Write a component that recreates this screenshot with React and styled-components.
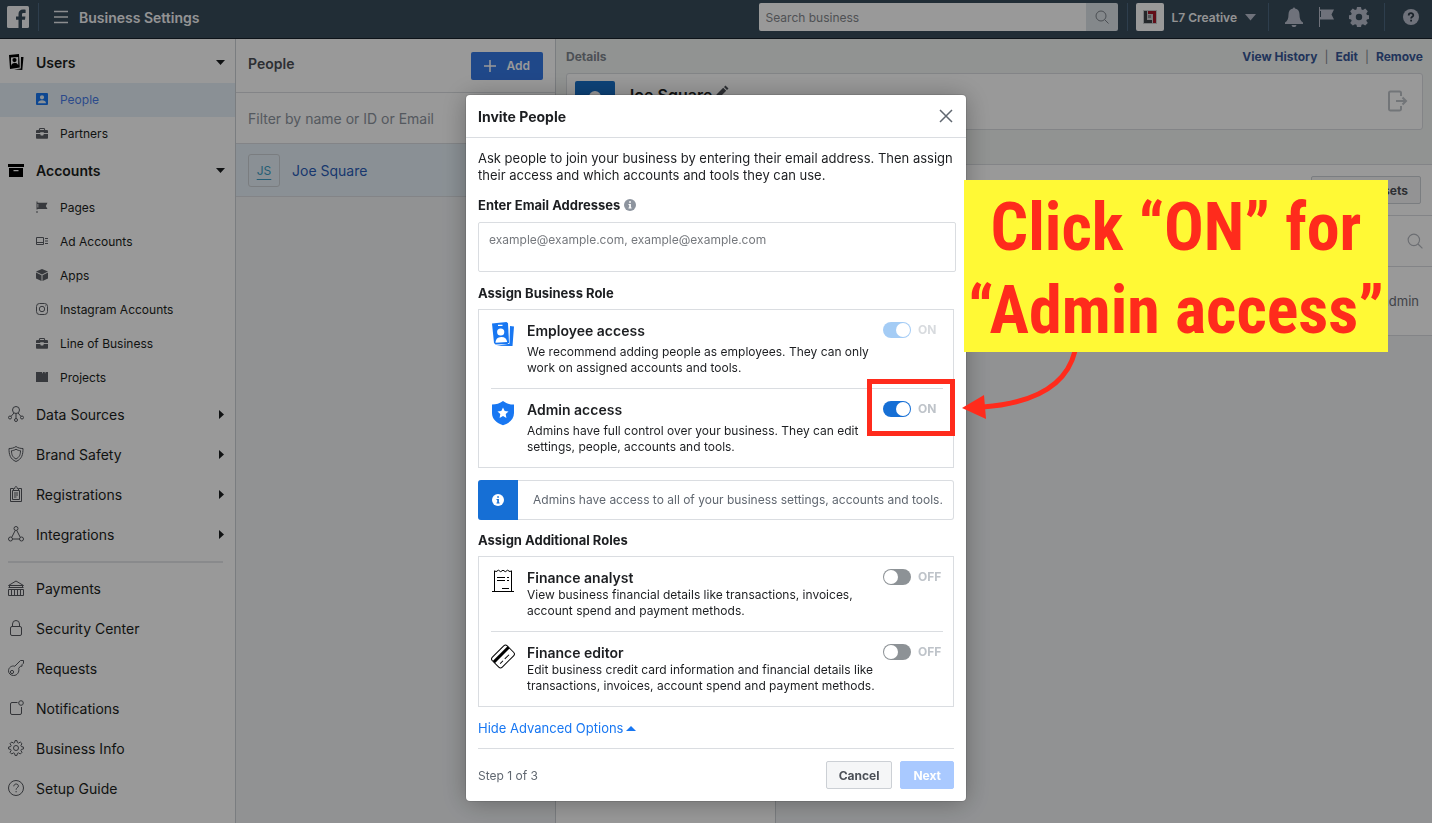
import React, { useState } from "react";
import styled, { createGlobalStyle } from "styled-components";

const GlobalStyle = createGlobalStyle`
  :root {
    --ink: #1c1e21;
    --muted: #606770;
    --line: #dadde1;
    --blue: #1877f2;
    --deep-blue: #166fd5;
    --panel: #f2f4f6;
    --red: #ff2b1c;
  }

  * {
    box-sizing: border-box;
  }

  body {
    margin: 0;
    color: var(--ink);
    font-family: Inter, Roboto, "Liberation Sans", sans-serif;
    font-size: 13px;
  }

  button,
  input,
  textarea {
    font: inherit;
  }
`;

/* ---------- page shell ---------- */

const Page = styled.div`
  display: flex;
  flex-direction: column;
  min-height: 100vh;
`;

const Columns = styled.div`
  display: grid;
  grid-template-columns: 236px 320px 1fr;
  flex: 1;
`;

/* ---------- top bar ---------- */

const TopBar = styled.header`
  display: flex;
  align-items: center;
  justify-content: space-between;
  height: 39px;
  padding: 0 13px 4px 7px;
  background-color: #384b5b;
  border-bottom: 1px solid #17212b;
  color: #f5f6f7;
`;

const BarGroup = styled.div`
  display: flex;
  align-items: center;
`;

const BarDivider = styled.span`
  width: 1px;
  height: 28px;
  margin: 0 ${(props) => props.$after}px 0 ${(props) => props.$before}px;
  background-color: #4d6880;
`;

const IconButton = styled.button`
  display: flex;
  padding: 0;
  border: 0;
  background: none;
  color: ${(props) => props.$tone || "#b9bfcd"};
`;

const BarTitle = styled.h1`
  margin: 0 0 0 11px;
  font-size: 14px;
  font-weight: 600;
`;

const Search = styled.form`
  display: flex;
  width: 359px;
  height: 28px;
`;

const SearchInput = styled.input`
  flex: 1;
  min-width: 0;
  padding: 0 7px;
  border: 0;
  border-radius: 2px 0 0 2px;
  background-color: #fff;
  font-size: 12px;

  &::placeholder {
    color: #85888d;
    opacity: 1;
  }
`;

const SearchButton = styled.button`
  display: flex;
  align-items: center;
  justify-content: center;
  width: 32px;
  padding: 0;
  border: 0;
  border-radius: 0 2px 2px 0;
  background-color: #dce3e8;
  color: #7d838b;
`;

const Account = styled.button`
  display: flex;
  align-items: center;
  gap: 8px;
  padding: 0;
  border: 0;
  background: none;
  color: #f5f6f7;
  font-size: 12px;
  font-weight: 600;
`;

const BarIcons = styled.div`
  display: flex;
  align-items: center;
  gap: 14px;
`;

/* ---------- side menu ---------- */

const SideMenu = styled.nav`
  padding-top: 4px;
  border-right: 1px solid #ccd0d5;
  background-color: #fff;
`;

const MenuRow = styled.a`
  display: flex;
  align-items: center;
  gap: 12px;
  height: 40px;
  padding: 0 9px 2px 8px;
  color: var(--ink);
  font-size: 14px;
  font-weight: ${(props) => (props.$bold ? 600 : 400)};
  text-decoration: none;

  span {
    flex: 1;
  }
`;

const SubRow = styled.a`
  display: flex;
  align-items: center;
  gap: 12px;
  height: 34px;
  padding: 0 0 2px 36px;
  background-color: ${(props) => (props.$active ? "#e7f1f8" : "transparent")};
  color: ${(props) => (props.$active ? "#4a7ce8" : "var(--ink)")};
  font-size: 12px;
  text-decoration: none;
`;

const MenuRule = styled.hr`
  height: 2px;
  margin: 6px 12px 6px 8px;
  border: 0;
  background-color: #e4e6ea;
`;

/* ---------- people list ---------- */

const PeopleColumn = styled.section`
  border-right: 1px solid #ccd0d5;
  background-color: var(--panel);
`;

const PeopleHeader = styled.div`
  display: flex;
  align-items: center;
  justify-content: space-between;
  height: 54px;
  padding: 0 12px;
  border-bottom: 1px solid var(--line);
  background-color: #fff;
`;

const ColumnTitle = styled.h2`
  margin: 0;
  padding-bottom: 4px;
  color: #4b4f56;
  font-size: 14px;
  font-weight: 600;
`;

const AddButton = styled.button`
  display: flex;
  align-items: center;
  gap: 10px;
  height: 28px;
  padding: 0 13px;
  border: 0;
  border-radius: 2px;
  background-color: #3578e5;
  color: #fff;
  font-size: 12px;
  font-weight: 600;
`;

const FilterInput = styled.input`
  display: block;
  width: 100%;
  height: 51px;
  padding: 0 12px;
  border: 0;
  border-bottom: 1px solid var(--line);
  background-color: #fff;
  font-size: 14px;

  &::placeholder {
    color: #8d949e;
    opacity: 1;
  }
`;

const PersonRow = styled.a`
  display: flex;
  align-items: center;
  gap: 12px;
  height: 53px;
  padding: 0 12px;
  border-bottom: 1px solid var(--line);
  background-color: #e7f1f8;
  color: #2a5db8;
  font-size: 14px;
  text-decoration: none;
`;

const Initials = styled.span`
  display: flex;
  align-items: center;
  justify-content: center;
  width: 32px;
  height: 33px;
  border: 1px solid #ccd0d5;
  border-radius: 3px;
  color: #3c9cc4;
  font-size: 12px;
  text-decoration: underline;
  text-underline-offset: 4px;
`;

/* ---------- details ---------- */

const Details = styled.main`
  display: flex;
  flex-direction: column;
  background-color: var(--panel);
`;

const DetailsTop = styled.div`
  padding: 0 9px 34px 10px;
  border-bottom: 1px solid var(--line);
  background-color: #f2f5f3;
`;

const DetailsBar = styled.div`
  display: flex;
  align-items: center;
  justify-content: space-between;
  height: 34px;
  color: #7f858e;
  font-size: 12px;
  font-weight: 700;
`;

const Actions = styled.div`
  display: flex;
  gap: 7px;
  font-weight: 400;

  a {
    color: #385898;
    font-weight: 700;
    text-decoration: none;
  }
`;

const ProfileCard = styled.div`
  display: flex;
  gap: 10px;
  height: 57px;
  padding: 7px 14px 7px 8px;
  overflow: hidden;
  border: 1px solid var(--line);
  border-radius: 3px;
  background-color: #fff;
`;

const ProfilePhoto = styled.div`
  width: 40px;
  height: 40px;
  border-radius: 2px;
  background-color: #166fc8;
`;

const ProfileName = styled.h2`
  display: flex;
  flex: 1;
  gap: 4px;
  margin: 4px 0 0;
  font-size: 16px;
  font-weight: 600;
  line-height: 20px;
`;

const Assets = styled.div`
  display: grid;
  grid-template-columns: 220px 1fr;
  flex: 1;
`;

const AssetTypes = styled.div`
  border-right: 1px solid #ccd0d5;
  background-color: #fff;
`;

const AssetRow = styled.div`
  display: flex;
  align-items: center;
  justify-content: flex-end;
  height: ${(props) => props.$height}px;
  padding: 0 ${(props) => props.$inset}px;
  border-bottom: 1px solid var(--line);
  background-color: #fff;
  color: #6b7078;

  svg {
    color: #b4b8bf;
  }
`;

/* ---------- dialog ---------- */

const Backdrop = styled.div`
  position: fixed;
  inset: 0;
  display: flex;
  align-items: flex-start;
  justify-content: center;
  padding-top: 95px;
  background-color: rgba(0, 0, 0, 0.4);
`;

const Dialog = styled.section`
  position: relative;
  width: 500px;
  border-radius: 4px;
  background-color: #fff;
  box-shadow: 0 2px 26px rgba(0, 0, 0, 0.3), 0 0 0 1px rgba(0, 0, 0, 0.1);
`;

const DialogHeader = styled.div`
  display: flex;
  align-items: center;
  justify-content: space-between;
  height: 43px;
  padding: 0 13px 0 12px;
  border-bottom: 1px solid var(--line);
`;

const DialogTitle = styled.h2`
  margin: 0;
  font-size: 14px;
  font-weight: 700;
`;

const DialogBody = styled.div`
  padding: 12px 12px 0;
`;

const Intro = styled.p`
  margin: 0 -6px 12px 0;
  line-height: 17px;
`;

const FieldLabel = styled.label`
  display: flex;
  align-items: center;
  gap: 4px;
  height: 18px;
  font-weight: 700;
`;

const RolesHeading = styled.h3`
  height: 18px;
  margin: 0 0 7px;
  font-size: 13px;
  font-weight: 700;
  line-height: 18px;
`;

const EmailBox = styled.textarea`
  display: block;
  width: 478px;
  height: 50px;
  margin: 8px 0 12px;
  padding: 8px 10px;
  border: 1px solid var(--line);
  border-radius: 2px;
  font-size: 12px;
  line-height: 18px;
  resize: none;

  &::placeholder {
    color: #75787d;
    opacity: 1;
  }
`;

const RoleList = styled.div`
  padding: 0 10px 0 12px;
  border: 1px solid var(--line);
`;

const Role = styled.div`
  display: flex;
  padding: 12px 0;

  & + & {
    border-top: 1px solid var(--line);
  }

  & > svg {
    flex: none;
  }
`;

const RoleText = styled.div`
  display: flex;
  flex: 1;
  flex-direction: column;
  gap: ${(props) => (props.$spaced ? 4 : 0)}px;
  margin-left: 12px;
`;

const RoleName = styled.label`
  font-size: 14px;
  font-weight: 600;
  line-height: 18px;
`;

const RoleInfo = styled.p`
  margin: 0;
  font-size: 12px;
  line-height: 16px;
`;

const SwitchWrap = styled.div`
  display: flex;
  gap: 7px;
  width: 60px;
  height: 16px;
  opacity: ${(props) => (props.$dim ? 0.6 : 1)};
  color: #bec3c9;
  font-size: 12px;
  font-weight: 700;
  line-height: 16px;
`;

const Switch = styled.input`
  appearance: none;
  flex: none;
  width: 28px;
  height: 16px;
  margin: 0;
  border-radius: 8px;
  background-color: #8d9296;

  &::before {
    content: "";
    display: block;
    width: 14px;
    height: 14px;
    margin: 1px;
    border-radius: 50%;
    background-color: #fff;
  }

  &:checked {
    background-color: ${(props) => (props.$dim ? "#69abf0" : "#166fd5")};
  }

  &:checked::before {
    margin-left: 13px;
  }
`;

const Notice = styled.div`
  display: flex;
  height: 40px;
  margin: 12px 0 11px;
  border: 1px solid var(--line);
  border-left: 0;
  border-radius: 3px;
  color: var(--muted);
  font-size: 12px;
  line-height: 38px;
`;

const NoticeIcon = styled.div`
  display: flex;
  align-items: center;
  justify-content: center;
  width: 40px;
  height: 40px;
  margin: -1px 15px 0 0;
  border-radius: 3px 0 0 3px;
  background-color: var(--deep-blue);
  color: #fff;
`;

const MoreButton = styled.button`
  display: flex;
  align-items: center;
  gap: 3px;
  height: 18px;
  margin: 12px 0 11px;
  padding: 0;
  border: 0;
  background: none;
  color: var(--blue);
`;

const Footer = styled.div`
  display: flex;
  align-items: center;
  gap: 8px;
  height: 53px;
  border-top: 1px solid var(--line);
  color: var(--muted);
  font-size: 12px;

  span {
    flex: 1;
  }
`;

const Button = styled.button`
  height: 28px;
  padding: 0 12px;
  border: 1px solid ${(props) => (props.$primary ? "#a9c9ff" : "#ccd0d5")};
  border-radius: 2px;
  background-color: ${(props) => (props.$primary ? "#a9c9ff" : "#f5f6f7")};
  color: ${(props) => (props.$primary ? "#fff" : "#4b4f56")};
  font-size: 12px;
  font-weight: 700;
`;

/* ---------- callout drawn over the dialog ---------- */

const Highlight = styled.div`
  position: absolute;
  top: 284px;
  left: 401px;
  width: 88px;
  height: 57px;
  border: 5px solid var(--red);
`;

const Callout = styled.div`
  position: absolute;
  top: 85px;
  left: 498px;
  width: 424px;
  height: 172px;
  padding-top: 6px;
  background-color: #fff935;
  color: var(--red);
  font-family: "Roboto Condensed", "Liberation Sans Narrow", "Liberation Sans",
    sans-serif;
  font-size: 66px;
  font-weight: 700;
  line-height: 83px;
  text-align: center;
  white-space: nowrap;
`;

const Arrow = styled.svg`
  position: absolute;
  top: 256px;
  left: 495px;
`;

/* ---------- icons ---------- */

const glyphs = {
  badges: (
    <g fill="currentColor" stroke="none">
      <path
        fillRule="evenodd"
        d="M1 1 11 0l.8 13.5L2 15zM3 11.9c.6-2 1.7-2.8 3.6-2.9 1.8-.1 3 .5 3.6 2.2V3L3 3.6zM6.5 4a2 2 0 1 1 0 4.2 2 2 0 0 1 0-4.200z"
      />
      <path d="M13 3h2.500L14.300 16 6 15.600l6.800-1.200z" />
    </g>
  ),
  box: (
    <path
      d="M0 2h16v3H0zM1 6h14v9H1zM5.500 8v1.200h5V8z"
      fill="currentColor"
      fillRule="evenodd"
      stroke="none"
    />
  ),
  person: (
    <path
      d="M3 2h10a1 1 0 0 1 1 1v10a1 1 0 0 1-1 1H3a1 1 0 0 1-1-1V3a1 1 0 0 1 1-1zm5 2.200a2.100 2.100 0 1 0 0 4.200 2.100 2.100 0 0 0 0-4.200zM4 12.200h8C11.800 10 10.300 9.200 8 9.200S4.200 10 4 12.200z"
      fill="currentColor"
      fillRule="evenodd"
      stroke="none"
    />
  ),
  briefcase: (
    <path
      d="M5.500 3h5l.8 2H13a1 1 0 0 1 1 1v2H9.800v-.700H6.200V8H2V6a1 1 0 0 1 1-1h1.700zm.7 1-.3 1h4.200l-.3-1zM2 9h4.200l.6 1.500h2.400L9.800 9H14v4a.8.8 0 0 1-.8.8H2.800A.8.8 0 0 1 2 13z"
      fill="currentColor"
      fillRule="evenodd"
      stroke="none"
    />
  ),
  flag: (
    <path
      d="M2.500 2.500h1v1.200h10L11.800 7l1.700 3h-10v.600h-1zM2.500 12h1v2h-1zM3.500 5v3.600h.8V5z"
      fill="currentColor"
      fillRule="evenodd"
      stroke="none"
    />
  ),
  ads: (
    <path d="M2.500 4.500h7v7h-7zM2.500 9.500h7M11 5.500h3M11 8h3M11 10.500h3" />
  ),
  cube: (
    <path
      d="M8 2l6 2.500-6 3-6-3zM2 5.500l5.500 2.800V14L2 11.500zM14 5.500 8.500 8.300V14l5.500-2.500z"
      fill="currentColor"
      stroke="none"
    />
  ),
  instagram: (
    <g>
      <rect x="2.500" y="2.500" width="11" height="11" rx="3" />
      <circle cx="8" cy="8" r="2.700" />
      <path d="M11 4.800h.6" />
    </g>
  ),
  folder: (
    <path
      d="M2 3h6v1.200h.800V3h2v1.200h.700V3H14v10H2z"
      fill="currentColor"
      stroke="none"
    />
  ),
  sources: (
    <g>
      <circle cx="8" cy="4" r="3.500" />
      <circle cx="2" cy="11.500" r="1.500" />
      <circle cx="14" cy="11.500" r="1.500" />
      <circle cx="8" cy="14" r="1.500" />
      <path d="M8 7.500v5M3 10.400 6 7M13 10.400 10 7" />
    </g>
  ),
  shield: (
    <g>
      <path d="M8 .500c2 1.500 4.500 2 7 2 0 6-1 10.500-7 13-6-2.500-7-7-7-13 2.500 0 5-.5 7-2z" />
      <path d="M8 3.200c1.500 1 3 1.400 4.500 1.500 0 4-1 6.500-4.500 8.300-3.500-1.800-4.500-4.300-4.500-8.300C5 4.600 6.500 4.200 8 3.200z" />
    </g>
  ),
  clipboard: (
    <g>
      <path d="M5 2.500H2.500v13h11v-13H11" />
      <path d="M4.500 4.500h7v9h-7zM5.500 4.200V2.500h1.300c0-2.700 2.400-2.700 2.400 0h1.300v1.700M6 7h4M6 9h4M6 11h2.500" />
    </g>
  ),
  nodes: (
    <g>
      <circle cx="8" cy="2.500" r="2" />
      <circle cx="2.500" cy="13" r="2" />
      <circle cx="13.500" cy="13" r="2" />
      <path d="M7.200 4.500 3.800 11.200M8.800 4.500l3.400 6.700M4.500 13h7" />
    </g>
  ),
  bank: (
    <path d="M.500 5.500 8 1l7.500 4.500zM.500 7.500h15M1.500 5.500v2M14.500 5.500v2M.500 15.500v-6h15v6zM3.500 9.500v6M6.500 9.500v6M9.500 9.500v6M12.500 9.500v6" />
  ),
  lock: (
    <g>
      <rect x="2.500" y="6.500" width="11" height="9" rx="1.500" />
      <path d="M4.500 6.500V4a3.500 3.500 0 0 1 7 0v2.500" />
    </g>
  ),
  key: (
    <g>
      <path d="M12.500.5h3v2.700L14 4.700v1.500h-1.500L10.700 8.300c.9 3.600-1.400 7.200-5 7.200-2.900 0-5.200-1.900-5.200-4.700 0-3.100 2.900-5.500 6.300-4.600z" />
      <circle cx="4" cy="12" r="1.600" />
    </g>
  ),
  notify: (
    <g>
      <path d="M9.500 2.500H4A1.500 1.500 0 0 0 2.500 4v9A1.500 1.500 0 0 0 4 14.500h8a1.500 1.500 0 0 0 1.500-1.500V7" />
      <circle cx="13" cy="3" r="2.300" />
    </g>
  ),
  gear: (
    <g>
      <circle cx="8" cy="8" r="2.500" />
      <path d="M6.600 2.600 7 .600h2l.4 2 1.200.500L12.300 2 14 3.700l-1.100 1.700.5 1.200 2 .4v2l-2 .4-.5 1.200 1.100 1.700-1.700 1.700-1.700-1.100-1.200.500-.4 2H7l-.4-2-1.200-.5L3.700 14 2 12.300l1.100-1.700-.5-1.200-2-.4V7l2-.4.5-1.200L2 3.700 3.700 2l1.700 1.100z" />
    </g>
  ),
  help: (
    <g>
      <circle cx="8" cy="8" r="7.500" />
      <path d="M5.800 6.300c0-3 4.600-3 4.600-.3 0 1.600-2.300 1.700-2.300 3.700M8.100 11v1.300" />
    </g>
  ),
};

function Glyph({ name, tone = "#55585e" }) {
  return (
    <svg
      width="16"
      height="16"
      viewBox="0 0 16 16"
      fill="none"
      stroke="currentColor"
      color={tone}
      aria-hidden="true"
    >
      {glyphs[name]}
    </svg>
  );
}

// the second level icons are twelve pixels wide inside the same artboard
function SmallGlyph({ name, tone = "#5d6066" }) {
  return (
    <svg
      width="12"
      height="12"
      viewBox="2 2 12 12"
      overflow="visible"
      fill="none"
      stroke="currentColor"
      color={tone}
      aria-hidden="true"
    >
      {glyphs[name]}
    </svg>
  );
}

function Caret({ direction }) {
  const paths = { down: "M0 2h9L4.500 7z", right: "M3 0l5 4.500L3 9z", up: "M0 7h10L5 2z" };
  return (
    <svg width="10" height="9" viewBox="0 0 10 9" fill="currentColor" aria-hidden="true">
      <path d={paths[direction]} />
    </svg>
  );
}

function Magnifier({ size = 14 }) {
  return (
    <svg width={size} height={size} viewBox="0 0 14 14" fill="none" stroke="currentColor" aria-hidden="true">
      <circle cx="6" cy="6" r="5" />
      <path d="M9.600 9.600 13.500 13.500" />
    </svg>
  );
}

function InfoDot({ size, mark }) {
  return (
    <svg width={size} height={size} viewBox="0 0 12 12" aria-hidden="true">
      <circle cx="6" cy="6" r="6" fill="currentColor" />
      <path d="M5.200 2.300h1.700v1.500H5.200zM4.500 5h2.400v3.500h.7v1H4.500v-1h.7V6h-.7z" fill={mark} />
    </svg>
  );
}

function EmployeeIcon() {
  return (
    <svg width="24" height="26" viewBox="0 0 24 26" aria-hidden="true">
      <path d="M1 1.500 15.500 0 17 1.300 18 20.300 16.500 22 4.500 22.500 3 21z" fill="#1877f2" />
      <path d="M19 4l4 .5L21.500 24l-16-.3 13-2z" fill="#1877f2" />
      <circle cx="9.700" cy="10" r="3.600" fill="#fff" />
      <path d="M7 2.700h4.500v1.200H7zM4.500 20.800c.2-3.800 2-5.800 5.700-5.900 3.500-.1 5.600 1.500 6 5.200z" fill="#fff" />
    </svg>
  );
}

function AdminIcon() {
  return (
    <svg width="24" height="26" viewBox="0 0 24 26" aria-hidden="true">
      <path d="M12 0c3 2.500 7 3.500 11 3.500v8.500c0 6-4.500 10-11 12.200C5.500 22 1 18 1 12V3.500C5 3.500 9 2.500 12 0z" fill="#1877f2" />
      <path d="M12 6.500l1.700 3.500 3.800.5-2.800 2.600.7 3.900-3.400-1.900L8.600 17l.7-3.900-2.800-2.600 3.800-.5z" fill="#fff" />
    </svg>
  );
}

function ReceiptIcon() {
  return (
    <svg width="24" height="24" viewBox="0 0 24 24" fill="none" stroke="#000" aria-hidden="true">
      <path d="M3.500 22.500V2M20.500 22.500V2M1 22.500h22" />
      <path d="M3.500 1.500 5 2.700l2.400-1.500L9.700 2.700 12 1.200l2.300 1.500 2.300-1.500L19 2.700l1.500-1.200M6 8.500h8M16 8.500h2M6 11.500h8M16 11.500h2M11 19.500h7" />
    </svg>
  );
}

function CardIcon() {
  return (
    <svg width="24" height="26" viewBox="0 0 24 26" fill="none" stroke="#000" aria-hidden="true">
      <g transform="rotate(-45 12 12.500)">
        <rect x="1.500" y="5.500" width="21" height="14" rx="2.500" />
        <path d="M1.500 10h21" strokeWidth="3" />
        <path d="M5 15.500h4M11.500 15.500h6" />
      </g>
    </svg>
  );
}

/* ---------- data ---------- */

const userLinks = [
  { icon: "person", label: "People", active: true },
  { icon: "briefcase", label: "Partners" },
];

const accountLinks = [
  { icon: "flag", label: "Pages" },
  { icon: "ads", label: "Ad Accounts" },
  { icon: "cube", label: "Apps" },
  { icon: "instagram", label: "Instagram Accounts" },
  { icon: "briefcase", label: "Line of Business" },
  { icon: "folder", label: "Projects" },
];

const groupLinks = [
  { icon: "sources", label: "Data Sources" },
  { icon: "shield", label: "Brand Safety" },
  { icon: "clipboard", label: "Registrations" },
  { icon: "nodes", label: "Integrations" },
];

const plainLinks = [
  { icon: "bank", label: "Payments" },
  { icon: "lock", label: "Security Center" },
  { icon: "key", label: "Requests" },
  { icon: "notify", label: "Notifications" },
  { icon: "gear", label: "Business Info" },
  { icon: "help", label: "Setup Guide" },
];

const businessRoles = [
  {
    id: "employee",
    icon: <EmployeeIcon />,
    name: "Employee access",
    info: "We recommend adding people as employees. They can only work on assigned accounts and tools.",
    on: true,
    locked: true,
  },
  {
    id: "admin",
    icon: <AdminIcon />,
    name: "Admin access",
    info: "Admins have full control over your business. They can edit settings, people, accounts and tools.",
    on: true,
  },
];

const extraRoles = [
  {
    id: "analyst",
    icon: <ReceiptIcon />,
    name: "Finance analyst",
    info: "View business financial details like transactions, invoices, account spend and payment methods.",
  },
  {
    id: "editor",
    icon: <CardIcon />,
    name: "Finance editor",
    info: "Edit business credit card information and financial details like transactions, invoices, account spend and payment methods.",
  },
];

/* ---------- components ---------- */

function Header() {
  return (
    <TopBar>
      <BarGroup>
        <svg width="22" height="22" viewBox="0 0 22 22" aria-label="Facebook">
          <rect width="22" height="22" rx="1.500" fill="#f5f6f7" />
          <path
            d="M15 22v-8.300h3l.4-3.200H15V8.400c0-1 .3-1.500 1.600-1.500h2V3.800c-.5 0-1.400-.2-2.600-.2-2.700 0-4.500 1.500-4.500 4.500v2.400H9v3.200h2.500V22z"
            fill="#384b5b"
          />
        </svg>
        <BarDivider $before={9} $after={15} />
        <IconButton type="button" aria-label="Menu" $tone="#e9ebee">
          <svg width="14" height="14" viewBox="0 0 14 14" stroke="currentColor" strokeWidth="1.300">
            <path d="M0 1.500h14M0 7h14M0 12.500h14" />
          </svg>
        </IconButton>
        <BarTitle>Business Settings</BarTitle>
      </BarGroup>
      <BarGroup>
        <Search>
          <SearchInput aria-label="Search business" placeholder="Search business" />
          <SearchButton type="button" aria-label="Search">
            <Magnifier />
          </SearchButton>
        </Search>
        <BarDivider $before={9} $after={8} />
        <Account type="button">
          <svg width="28" height="28" viewBox="0 0 28 28" aria-hidden="true">
            <rect width="28" height="28" rx="2" fill="#fff" />
            <rect x="7" y="7" width="14" height="14" fill="#c9cbce" />
            <path d="M8 8h3v9h5v3H8z" fill="#3d4247" />
            <path d="M12 8h8v12h-3v-9h-5z" fill="#a3182a" />
            <path d="M12 12h3v3h-3z" fill="#8d9094" />
          </svg>
          L7 Creative
          <svg width="11" height="7" viewBox="0 0 11 7" fill="#b9bfcd" aria-hidden="true">
            <path d="M0 0h11L5.500 6.500z" />
          </svg>
        </Account>
        <BarDivider $before={12} $after={15} />
        <BarIcons>
          <IconButton type="button" aria-label="Alerts">
            <svg width="20" height="20" viewBox="0 0 20 20" fill="currentColor">
              <path d="M9 1.500C9 0 11 0 11 1.500c3.200.6 4.500 3 4.500 6 0 4 1 6.500 3.500 8v1.500H1v-1.500c2.500-1.500 3.500-4 3.500-8 0-3 1.300-5.400 4.500-6zM7.500 18h5c-.5 1.700-1.200 2-2.500 2s-2-.3-2.500-2z" />
            </svg>
          </IconButton>
          <IconButton type="button" aria-label="Pages">
            <svg width="17" height="20" viewBox="0 0 17 20" fill="currentColor">
              <path d="M1 0h1v2.500h14L13.500 7.500 16 12.500H2V20H1z" />
              <path d="M2 4h1v6H2z" fill="#384b5b" />
            </svg>
          </IconButton>
          <IconButton type="button" aria-label="Settings">
            <svg width="20" height="20" viewBox="0 0 20 20" fill="currentColor" fillRule="evenodd">
              <path d="M8 0h4l.5 2.500 1.500.6 2.200-1.500 2.600 2.700-1.500 2.200.6 1.400L20 8.200v3.700l-2.100.5-.6 1.400 1.500 2.200-2.600 2.600-2.200-1.400-1.500.6L12 20H8l-.5-2.200-1.500-.6-2.200 1.400-2.600-2.600 1.500-2.200-.6-1.400L0 11.900V8.200l2.100-.3.600-1.400-1.500-2.200 2.600-2.700L6 3.100l1.500-.6zM10 6.800a3.200 3.200 0 1 0 0 6.400 3.200 3.200 0 0 0 0-6.400z" />
            </svg>
          </IconButton>
        </BarIcons>
        <BarDivider $before={15} $after={18} />
        <IconButton type="button" aria-label="Help">
          <svg width="16" height="16" viewBox="0 0 16 16">
            <circle cx="8" cy="8" r="8" fill="currentColor" />
            <path d="M5.700 6.500c0-3 4.600-3 4.600-.3 0 1.600-2.200 1.600-2.200 3.300M8.100 10.800v1.800" fill="none" stroke="#2c3a47" strokeWidth="1.800" />
          </svg>
        </IconButton>
      </BarGroup>
    </TopBar>
  );
}

function SubLinks({ links }) {
  return links.map(({ icon, label, active }) => (
    <SubRow key={label} href="#" $active={active}>
      <SmallGlyph name={icon} tone={active ? "#1877f2" : undefined} />
      {label}
    </SubRow>
  ));
}

function Sidebar() {
  return (
    <SideMenu>
      <MenuRow href="#" $bold>
        <Glyph name="badges" tone="#000" />
        <span>Users</span>
        <Caret direction="down" />
      </MenuRow>
      <SubLinks links={userLinks} />
      <MenuRow href="#" $bold>
        <Glyph name="box" tone="#000" />
        <span>Accounts</span>
        <Caret direction="down" />
      </MenuRow>
      <SubLinks links={accountLinks} />
      {groupLinks.map(({ icon, label }) => (
        <MenuRow key={label} href="#">
          <Glyph name={icon} />
          <span>{label}</span>
          <Caret direction="right" />
        </MenuRow>
      ))}
      <MenuRule />
      {plainLinks.map(({ icon, label }) => (
        <MenuRow key={label} href="#">
          <Glyph name={icon} />
          <span>{label}</span>
        </MenuRow>
      ))}
    </SideMenu>
  );
}

function People() {
  return (
    <PeopleColumn>
      <PeopleHeader>
        <ColumnTitle>People</ColumnTitle>
        <AddButton type="button">
          <svg width="12" height="12" viewBox="0 0 12 12" stroke="currentColor" strokeWidth="1.500" aria-hidden="true">
            <path d="M6 0v12M0 6h12" />
          </svg>
          Add
        </AddButton>
      </PeopleHeader>
      <FilterInput aria-label="Filter people" placeholder="Filter by name or ID or Email" />
      <PersonRow href="#">
        <Initials>JS</Initials>
        Joe Square
      </PersonRow>
    </PeopleColumn>
  );
}

function PersonDetails() {
  return (
    <Details>
      <DetailsTop>
        <DetailsBar>
          Details
          <Actions>
            <a href="#">View History</a>|<a href="#">Edit</a>|<a href="#">Remove</a>
          </Actions>
        </DetailsBar>
        <ProfileCard>
          <ProfilePhoto>
            <svg width="40" height="40" viewBox="0 0 40 40" fill="#fff" aria-hidden="true">
              <circle cx="20" cy="16" r="6" />
              <path d="M8 34c0-8 5-10 12-10s12 2 12 10z" />
            </svg>
          </ProfilePhoto>
          <ProfileName>
            Joe Square
            <svg width="13" height="13" viewBox="0 0 13 13" fill="#4b4f56" aria-hidden="true">
              <path d="M9.500.500 12.500 3.500 11 5 8 2zM7.200 2.800l3 3L3.500 12.500l-3.300.3.300-3.300z" />
            </svg>
          </ProfileName>
          <svg width="20" height="40" viewBox="0 0 20 40" fill="none" stroke="#bec3c9" strokeWidth="2" aria-hidden="true">
            <path d="M13 15v-3a1.500 1.500 0 0 0-1.500-1.500h-9A1.500 1.500 0 0 0 1 12v16a1.500 1.500 0 0 0 1.500 1.500h9A1.500 1.500 0 0 0 13 28v-3M8 20h10M14.500 16.500 18 20l-3.500 3.500" />
          </svg>
        </ProfileCard>
      </DetailsTop>
      <Assets>
        <AssetTypes />
        <div>
          <AssetRow $height={51} $inset={11}>
            <Button type="button">Assign Assets</Button>
          </AssetRow>
          <AssetRow $height={51} $inset={9}>
            <Magnifier size={16} />
          </AssetRow>
          <AssetRow $height={69} $inset={13}>
            admin
          </AssetRow>
        </div>
      </Assets>
    </Details>
  );
}

function Roles({ roles, spaced }) {
  const [enabled, setEnabled] = useState(() =>
    Object.fromEntries(roles.map((role) => [role.id, Boolean(role.on)]))
  );

  return (
    <RoleList>
      {roles.map(({ id, icon, name, info, locked }) => (
        <Role key={id}>
          {icon}
          <RoleText $spaced={spaced}>
            <RoleName htmlFor={id}>{name}</RoleName>
            <RoleInfo>{info}</RoleInfo>
          </RoleText>
          <SwitchWrap $dim={locked}>
            <Switch
              id={id}
              type="checkbox"
              role="switch"
              checked={enabled[id]}
              disabled={locked}
              $dim={locked}
              onChange={() => setEnabled({ ...enabled, [id]: !enabled[id] })}
            />
            {enabled[id] ? "ON" : "OFF"}
          </SwitchWrap>
        </Role>
      ))}
    </RoleList>
  );
}

function InviteDialog() {
  return (
    <Backdrop>
      <Dialog role="dialog" aria-labelledby="invite-title">
        <DialogHeader>
          <DialogTitle id="invite-title">Invite People</DialogTitle>
          <IconButton type="button" aria-label="Close" $tone="#606770">
            <svg width="14" height="14" viewBox="0 0 14 14" stroke="currentColor" strokeWidth="1.500">
              <path d="M1 1l12 12M13 1 1 13" />
            </svg>
          </IconButton>
        </DialogHeader>
        <DialogBody>
          <Intro>
            Ask people to join your business by entering their email address.
            Then assign their access and which accounts and tools they can use.
          </Intro>
          <FieldLabel htmlFor="emails">
            Enter Email Addresses
            <IconButton as="span" $tone="#8d949e">
              <InfoDot size={12} mark="#fff" />
            </IconButton>
          </FieldLabel>
          <EmailBox id="emails" placeholder="example@example.com, example@example.com" />
          <RolesHeading>Assign Business Role</RolesHeading>
          <Roles roles={businessRoles} spaced />
          <Notice>
            <NoticeIcon>
              <InfoDot size={12} mark="#166fd5" />
            </NoticeIcon>
            Admins have access to all of your business settings, accounts and tools.
          </Notice>
          <RolesHeading>Assign Additional Roles</RolesHeading>
          <Roles roles={extraRoles} />
          <MoreButton type="button">
            Hide Advanced Options
            <Caret direction="up" />
          </MoreButton>
          <Footer>
            <span>Step 1 of 3</span>
            <Button type="button">Cancel</Button>
            <Button type="button" $primary>
              Next
            </Button>
          </Footer>
        </DialogBody>
        <Highlight />
        <Arrow width="120" height="72" viewBox="0 0 120 72" aria-hidden="true">
          <path d="M114 0C106 33 75 52 22 56" fill="none" stroke="#ff2b1c" strokeWidth="5" />
          <path d="M1 57 23 44l2 24z" fill="#ff2b1c" />
        </Arrow>
        <Callout>
          Click “ON” for
          <br />
          “Admin access”
        </Callout>
      </Dialog>
    </Backdrop>
  );
}

function App() {
  return (
    <>
      <GlobalStyle />
      <Page>
        <Header />
        <Columns>
          <Sidebar />
          <People />
          <PersonDetails />
        </Columns>
      </Page>
      <InviteDialog />
    </>
  );
}

export default App;
